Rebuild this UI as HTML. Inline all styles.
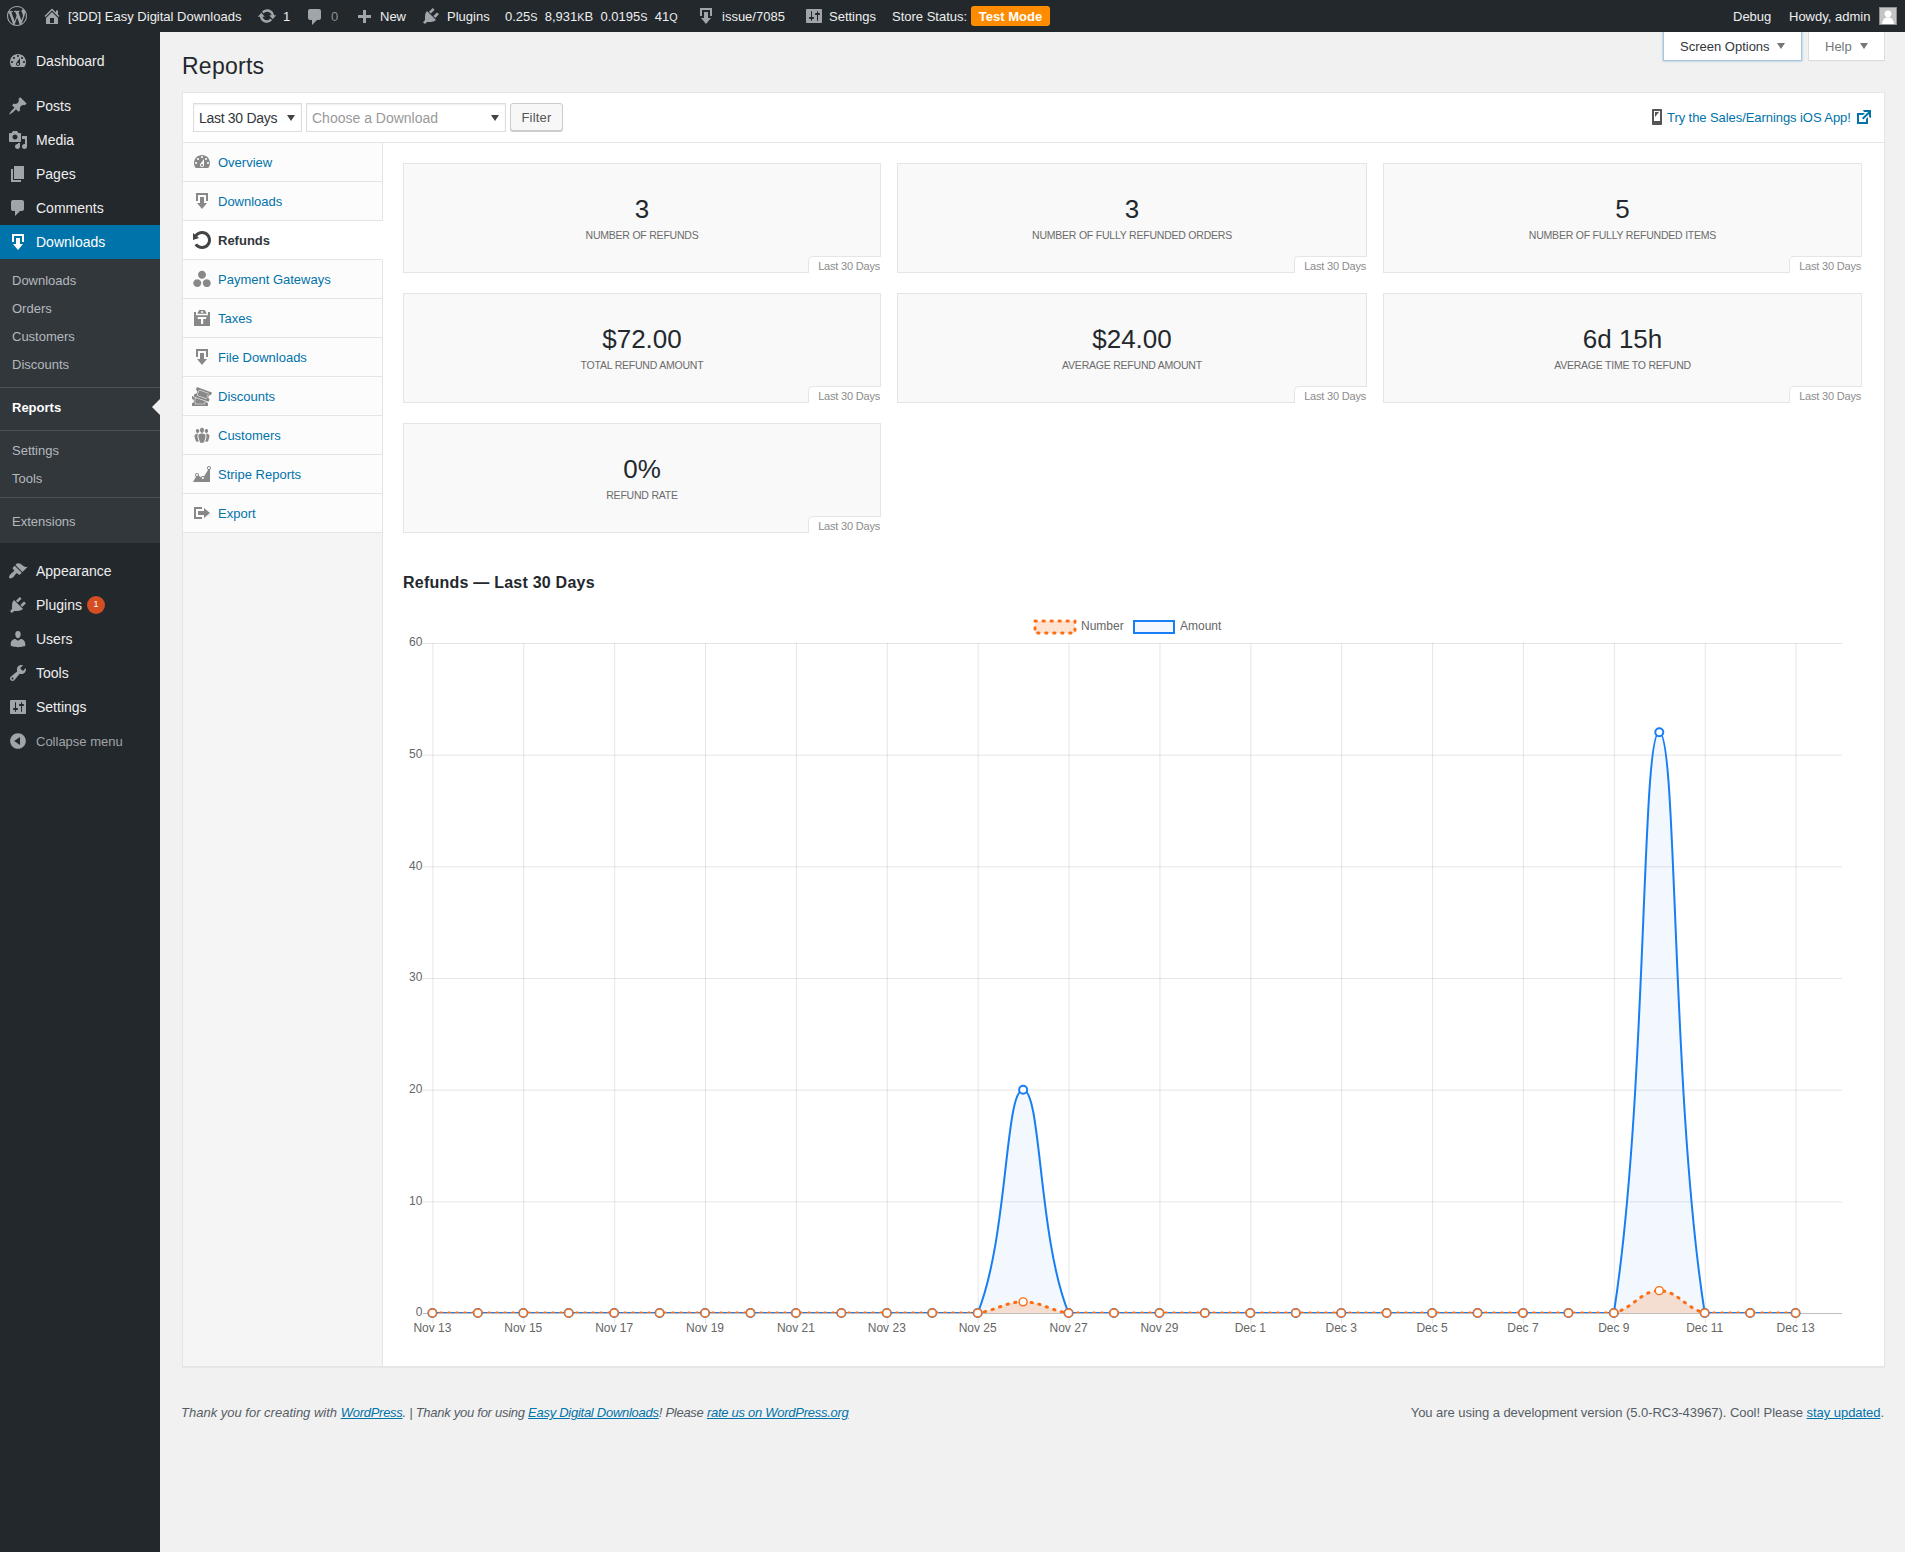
<!DOCTYPE html>
<html>
<head>
<meta charset="utf-8">
<title>Reports</title>
<style>
*{box-sizing:border-box;}
html,body{margin:0;padding:0;}
body{width:1905px;height:1552px;overflow:hidden;background:#f1f1f1;font-family:"Liberation Sans",sans-serif;font-size:13px;color:#444;position:relative;}
a{color:#0073aa;text-decoration:none;}
svg{display:block;}
.abs{position:absolute;}
/* ---------- admin bar ---------- */
#bar{position:absolute;left:0;top:0;width:1905px;height:32px;background:#23282d;color:#eee;font-size:13px;z-index:5;}
#bar .t{position:absolute;top:0;height:32px;line-height:34px;white-space:nowrap;color:#eee;}
#bar svg{position:absolute;fill:#a0a5aa;}
/* ---------- side menu ---------- */
#menu{position:absolute;left:0;top:32px;width:160px;height:1520px;background:#23282d;}
#menu .top{position:absolute;left:0;width:160px;height:34px;}
#menu .top .n{position:absolute;left:36px;top:0;line-height:34px;font-size:14px;color:#eee;white-space:nowrap;}
#menu .top svg{position:absolute;left:8px;top:7px;width:20px;height:20px;fill:#a0a5aa;}
#menu .sub{position:absolute;left:12px;font-size:13px;color:#b4b9be;white-space:nowrap;line-height:18px;}
/* ---------- content ---------- */
#panel{position:absolute;left:182px;top:92px;width:1703px;height:1275px;background:#fff;border:1px solid #e5e5e5;box-shadow:0 1px 1px rgba(0,0,0,.04);}
.nav{position:absolute;left:183px;width:200px;height:39px;background:#fcfcfc;border-bottom:1px solid #e5e5e5;border-right:1px solid #e5e5e5;}
.nav .n{position:absolute;left:35px;top:0;line-height:40px;font-size:13px;color:#0073aa;white-space:nowrap;}
.nav svg{position:absolute;left:9px;top:9px;width:20px;height:20px;fill:#888;}
.nav.cur{background:#fff;border-right-color:#fff;}
.nav.cur .n{color:#32373c;font-weight:bold;}
.nav.cur svg{fill:#444;}
.tile{position:absolute;background:#f9f9f9;border:1px solid #e5e5e5;height:110px;}
.tile .v{position:absolute;left:0;right:0;top:29px;text-align:center;font-size:26px;line-height:32px;color:#23282d;}
.tile .l{position:absolute;left:0;right:0;top:63px;text-align:center;font-size:10.5px;letter-spacing:-0.22px;line-height:16px;color:#6b6b6b;text-transform:uppercase;white-space:nowrap;}
.tile .r{position:absolute;right:-1px;bottom:-1px;width:73px;height:17px;background:#fff;border-top:1px solid #e5e5e5;border-left:1px solid #e5e5e5;border-top-left-radius:5px;font-size:11px;letter-spacing:-0.2px;line-height:18px;color:#8c8c8c;text-align:right;padding-right:1px;white-space:nowrap;}
</style>
</head>
<body>

<!-- ADMIN BAR -->
<div id="bar">
<svg style="left:7px;top:6px;width:20px;height:20px" viewBox="0 0 20 20"><path d="M20 10c0-5.51-4.49-10-10-10C4.48 0 0 4.49 0 10c0 5.52 4.48 10 10 10 5.51 0 10-4.48 10-10zM7.78 15.37L4.37 6.22c.55-.02 1.17-.08 1.17-.08.5-.06.44-1.13-.06-1.11 0 0-1.45.11-2.37.11-.18 0-.37 0-.58-.01C4.12 2.69 6.87 1.11 10 1.11c2.33 0 4.45.87 6.05 2.34-.68-.11-1.65.39-1.65 1.58 0 .74.45 1.36.9 2.1.35.61.55 1.36.55 2.46 0 1.49-1.4 5-1.4 5l-3.03-8.37c.54-.02.82-.17.82-.17.5-.05.44-1.25-.06-1.22 0 0-1.44.12-2.38.12-.87 0-2.33-.12-2.33-.12-.5-.03-.56 1.2-.06 1.22l.92.08 1.26 3.41zM17.41 10c.24-.64.74-1.87.43-4.25.7 1.29 1.05 2.71 1.05 4.25 0 3.29-1.73 6.24-4.4 7.78.97-2.59 1.94-5.2 2.92-7.78zM6.1 18.09C3.12 16.65 1.11 13.53 1.11 10c0-1.3.23-2.48.72-3.59C3.25 10.3 4.67 14.2 6.1 18.09zm4.03-6.63l2.58 6.98c-.86.29-1.76.45-2.71.45-.79 0-1.57-.11-2.29-.33.81-2.38 1.62-4.74 2.42-7.1z"/></svg>
<svg style="left:42px;top:6px;width:20px;height:20px" viewBox="0 0 20 20"><path d="M16 8.5l1.53 1.53-1.06 1.06L10 4.62l-6.47 6.47-1.06-1.06L10 2.5l4 4v-2h2v4zm-6-2.46l6 5.99V18H4v-5.97zM12 17v-5H8v5h4z"/></svg>
<span class="t" style="left:68px">[3DD] Easy Digital Downloads</span>
<svg style="left:257px;top:6px;width:20px;height:20px" viewBox="0 0 20 20"><path d="M10.2 3.28c3.53 0 6.43 2.61 6.92 6h2.08l-3.5 4-3.5-4h2.32c-.45-1.97-2.21-3.45-4.32-3.45-1.45 0-2.73.71-3.54 1.78L4.95 5.66C6.23 4.2 8.11 3.28 10.2 3.28zm-.4 13.44c-3.52 0-6.43-2.61-6.92-6H.8l3.5-4c1.17 1.33 2.33 2.67 3.5 4H5.48c.45 1.97 2.21 3.45 4.32 3.45 1.45 0 2.73-.71 3.54-1.78l1.71 1.95c-1.28 1.46-3.15 2.38-5.25 2.38z"/></svg>
<span class="t" style="left:283px">1</span>
<svg style="left:305px;top:7px;width:20px;height:20px" viewBox="0 0 20 20"><path d="M5 2h9c1.1 0 2 .9 2 2v7c0 1.1-.9 2-2 2h-2l-5 5v-5H5c-1.1 0-2-.9-2-2V4c0-1.1.9-2 2-2z"/></svg>
<span class="t" style="left:331px;color:#8a8f94">0</span>
<svg style="left:354px;top:7.5px;width:20px;height:20px" viewBox="0 0 20 20"><path d="M17 7v3h-5v5H9v-5H4V7h5V2h3v5h5z"/></svg>
<span class="t" style="left:380px">New</span>
<svg style="left:421px;top:6px;width:20px;height:20px" viewBox="0 0 20 20"><path d="M13.11 4.36L9.87 7.6 8 5.73l3.24-3.24c.35-.34 1.05-.2 1.56.32.52.51.66 1.21.31 1.55zm-8 1.77l.91-1.12 9.01 9.01-1.19.84c-.71.71-2.63 1.16-3.82 1.16H6.14L4.9 17.26c-.59.59-1.54.59-2.12 0-.59-.58-.59-1.53 0-2.12l1.24-1.24v-3.88c0-1.13.4-3.19 1.09-3.89zm7.26 3.97l3.24-3.24c.34-.35 1.04-.21 1.55.31.52.51.66 1.21.31 1.55l-3.24 3.25z"/></svg>
<span class="t" style="left:447px">Plugins</span>
<span class="t" style="left:505px">0.25<small>S</small>&nbsp;&nbsp;8,931<small>K</small>B&nbsp;&nbsp;0.0195<small>S</small>&nbsp;&nbsp;41<small>Q</small></span>
<svg style="left:696px;top:6px;width:20px;height:20px" viewBox="0 0 20 20"><path d="M14.01 4v6h2V2H4v8h2.01V4h8zm-2 2v6h3l-5 6-5-6h3V6h4z"/></svg>
<span class="t" style="left:722px">issue/7085</span>
<svg style="left:804px;top:6px;width:20px;height:20px" viewBox="0 0 20 20"><path d="M18 16V4c0-.55-.45-1-1-1H3c-.55 0-1 .45-1 1v12c0 .55.45 1 1 1h14c.55 0 1-.45 1-1zM8 11h1c.55 0 1 .45 1 1s-.45 1-1 1H8v1.5c0 .28-.22.5-.5.5s-.5-.22-.5-.5V13H6c-.55 0-1-.45-1-1s.45-1 1-1h1V5.5c0-.28.22-.5.5-.5s.5.22.5.5V11zm5-2h-1c-.55 0-1-.45-1-1s.45-1 1-1h1V5.5c0-.28.22-.5.5-.5s.5.22.5.5V7h1c.55 0 1 .45 1 1s-.45 1-1 1h-1v5.5c0 .28-.22.5-.5.5s-.5-.22-.5-.5V9z"/></svg>
<span class="t" style="left:829px">Settings</span>
<span class="t" style="left:892px">Store Status:</span>
<span class="abs" style="left:971px;top:6px;width:79px;height:20px;background:#ff8c00;border-radius:3px;color:#fff;font-weight:bold;font-size:13px;line-height:22px;text-align:center;white-space:nowrap">Test Mode</span>
<span class="t" style="left:1733px">Debug</span>
<span class="t" style="left:1789px">Howdy, admin</span>
<span class="abs" style="left:1879px;top:7px;width:18px;height:18px;background:#c4c4c4;border:1px solid #8c9196;overflow:hidden"><svg style="left:0;top:0;width:16px;height:16px;fill:#fff" viewBox="0 0 16 16"><circle cx="8" cy="5.8" r="3.4"/><path d="M2 16c.4-3.4 1.8-5.4 4.2-6.4h3.6c2.4 1 3.8 3 4.2 6.4z"/></svg></span>
</div>

<!-- SIDE MENU -->
<div id="menu">
<div class="top" style="top:12px;"><svg viewBox="0 0 20 20"><path d="M3.76 16h12.48c1.1-1.37 1.76-3.11 1.76-5 0-4.42-3.58-8-8-8s-8 3.58-8 8c0 1.89.66 3.63 1.76 5zM10 4c.55 0 1 .45 1 1s-.45 1-1 1-1-.45-1-1 .45-1 1-1zM6 6c.55 0 1 .45 1 1s-.45 1-1 1-1-.45-1-1 .45-1 1-1zm8 0c.55 0 1 .45 1 1s-.45 1-1 1-1-.45-1-1 .45-1 1-1zm-5.37 5.55L12 7v6c0 1.1-.9 2-2 2s-2-.9-2-2c0-.57.24-1.08.63-1.45zM4 10c.55 0 1 .45 1 1s-.45 1-1 1-1-.45-1-1 .45-1 1-1zm12 0c.55 0 1 .45 1 1s-.45 1-1 1-1-.45-1-1 .45-1 1-1zm-5 3c0-.55-.45-1-1-1s-1 .45-1 1 .45 1 1 1 1-.45 1-1z"/></svg><span class="n">Dashboard</span></div>
<div class="top" style="top:57px;"><svg viewBox="0 0 20 20"><path d="M10.44 3.02l1.82-1.82 6.36 6.35-1.83 1.82c-1.05-.68-2.48-.57-3.41.36l-.75.75c-.92.93-1.04 2.35-.35 3.41l-1.83 1.82-2.41-2.41-2.8 2.79c-.42.42-3.38 2.71-3.8 2.29s1.86-3.39 2.28-3.81l2.79-2.79L4.1 9.36l1.83-1.82c1.05.69 2.48.57 3.4-.36l.75-.75c.93-.92 1.05-2.35.36-3.41z"/></svg><span class="n">Posts</span></div>
<div class="top" style="top:91px;"><svg viewBox="0 0 20 20"><path d="M13 11V4c0-.55-.45-1-1-1h-1.67L9 1H5L3.67 3H2c-.55 0-1 .45-1 1v7c0 .55.45 1 1 1h10c.55 0 1-.45 1-1zM7 4.5c1.38 0 2.5 1.12 2.5 2.5S8.38 9.5 7 9.5 4.5 8.38 4.5 7 5.62 4.5 7 4.5zM14 6h5v10.5c0 1.38-1.12 2.5-2.5 2.5S14 17.88 14 16.5s1.12-2.5 2.5-2.5c.17 0 .34.02.5.05V9h-3V6zm-4 8.05V13h2v3.5c0 1.38-1.12 2.5-2.5 2.5S7 17.88 7 16.5 8.12 14 9.5 14c.17 0 .34.02.5.05z"/></svg><span class="n">Media</span></div>
<div class="top" style="top:125px;"><svg viewBox="0 0 20 20"><path d="M6 15V2h10v13H6zm-1 1h8v2H3V5h2v11z"/></svg><span class="n">Pages</span></div>
<div class="top" style="top:159px;"><svg viewBox="0 0 20 20"><path d="M5 2h9c1.1 0 2 .9 2 2v7c0 1.1-.9 2-2 2h-2l-5 5v-5H5c-1.1 0-2-.9-2-2V4c0-1.1.9-2 2-2z"/></svg><span class="n">Comments</span></div>
<div class="top" style="top:193px;background:#0073aa;"><svg style="fill:#fff" viewBox="0 0 20 20"><path d="M14.01 4v6h2V2H4v8h2.01V4h8zm-2 2v6h3l-5 6-5-6h3V6h4z"/></svg><span class="n" style="color:#fff">Downloads</span></div>
<div class="abs" style="left:0;top:227px;width:160px;height:284px;background:#32373c"></div>
<span class="sub" style="top:240px">Downloads</span>
<span class="sub" style="top:268px">Orders</span>
<span class="sub" style="top:296px">Customers</span>
<span class="sub" style="top:324px">Discounts</span>
<span class="sub" style="top:410px">Settings</span>
<span class="sub" style="top:438px">Tools</span>
<span class="sub" style="top:481px">Extensions</span>
<span class="sub" style="top:367px;color:#fff;font-weight:bold">Reports</span>
<div class="abs" style="left:0;top:355px;width:160px;height:1px;background:#4b5157"></div>
<div class="abs" style="left:0;top:398px;width:160px;height:1px;background:#4b5157"></div>
<div class="abs" style="left:0;top:465px;width:160px;height:1px;background:#4b5157"></div>
<div class="abs" style="left:152px;top:367px;width:0;height:0;border:8px solid transparent;border-right-color:#f1f1f1;border-left-width:0"></div>
<div class="top" style="top:522px;"><svg viewBox="0 0 20 20"><path d="M14.48 11.06L7.41 3.99l1.5-1.5c.5-.56 2.3-.47 3.51.32 1.21.8 1.43 1.28 2.91 2.1 1.18.64 2.45 1.26 4.45.85zm-.71.71L6.7 4.7 4.93 6.47c-.39.39-.39 1.02 0 1.41l1.06 1.06c.39.39.39 1.03 0 1.42-.6.6-1.43 1.11-2.21 1.69-.35.26-.7.53-1.01.84C1.43 14.23.4 16.08 1.4 17.07c.99 1 2.84-.03 4.18-1.36.31-.31.58-.66.85-1.02.57-.78 1.08-1.61 1.69-2.21.39-.39 1.02-.39 1.41 0l1.06 1.06c.39.39 1.02.39 1.41 0z"/></svg><span class="n">Appearance</span></div>
<div class="top" style="top:556px;"><svg viewBox="0 0 20 20"><path d="M13.11 4.36L9.87 7.6 8 5.73l3.24-3.24c.35-.34 1.05-.2 1.56.32.52.51.66 1.21.31 1.55zm-8 1.77l.91-1.12 9.01 9.01-1.19.84c-.71.71-2.63 1.16-3.82 1.16H6.14L4.9 17.26c-.59.59-1.54.59-2.12 0-.59-.58-.59-1.53 0-2.12l1.24-1.24v-3.88c0-1.13.4-3.19 1.09-3.89zm7.26 3.97l3.24-3.24c.34-.35 1.04-.21 1.55.31.52.51.66 1.21.31 1.55l-3.24 3.25z"/></svg><span class="n">Plugins</span><span class="abs" style="left:87px;top:8px;width:18px;height:18px;border-radius:9px;background:#d54e21;color:#fff;font-size:9px;line-height:17px;text-align:center">1</span></div>
<div class="top" style="top:590px;"><svg viewBox="0 0 20 20"><path d="M10 9.25c-2.27 0-2.73-3.44-2.73-3.44C7 4.02 7.82 2 9.97 2c2.16 0 2.98 2.02 2.71 3.81 0 0-.41 3.44-2.68 3.44zm0 2.57L12.72 10c2.39 0 4.52 2.33 4.52 4.53v2.49s-3.65 1.13-7.24 1.13c-3.65 0-7.24-1.13-7.24-1.13v-2.49c0-2.25 1.94-4.48 4.47-4.48z"/></svg><span class="n">Users</span></div>
<div class="top" style="top:624px;"><svg viewBox="0 0 20 20"><path d="M16.68 9.77c-1.34 1.34-3.3 1.67-4.95.99l-5.41 6.52c-.99.99-2.59.99-3.58 0s-.99-2.59 0-3.57l6.52-5.42c-.68-1.65-.35-3.61.99-4.95 1.28-1.28 3.12-1.62 4.72-1.06l-2.89 2.89 2.82 2.82 2.86-2.87c.53 1.58.18 3.39-1.08 4.65zM3.81 16.21c.4.39 1.04.39 1.43 0 .4-.4.4-1.04 0-1.43-.39-.4-1.03-.4-1.43 0-.39.39-.39 1.03 0 1.43z"/></svg><span class="n">Tools</span></div>
<div class="top" style="top:658px;"><svg viewBox="0 0 20 20"><path d="M18 16V4c0-.55-.45-1-1-1H3c-.55 0-1 .45-1 1v12c0 .55.45 1 1 1h14c.55 0 1-.45 1-1zM8 11h1c.55 0 1 .45 1 1s-.45 1-1 1H8v1.5c0 .28-.22.5-.5.5s-.5-.22-.5-.5V13H6c-.55 0-1-.45-1-1s.45-1 1-1h1V5.5c0-.28.22-.5.5-.5s.5.22.5.5V11zm5-2h-1c-.55 0-1-.45-1-1s.45-1 1-1h1V5.5c0-.28.22-.5.5-.5s.5.22.5.5V7h1c.55 0 1 .45 1 1s-.45 1-1 1h-1v5.5c0 .28-.22.5-.5.5s-.5-.22-.5-.5V9z"/></svg><span class="n">Settings</span></div>
<div class="top" style="top:692px;"><svg viewBox="0 0 20 20"><path d="M10 2.16c4.33 0 7.84 3.51 7.84 7.84s-3.51 7.84-7.84 7.84S2.16 14.33 2.16 10 5.67 2.16 10 2.16zm2 11.72V6.12L6.18 9.97z"/></svg><span class="n" style="font-size:13px;color:#a0a5aa;top:1px">Collapse menu</span></div>
</div>

<!-- CONTENT -->
<div class="abs" style="left:182px;top:51px;font-size:23px;letter-spacing:0.25px;line-height:31px;color:#23282d;white-space:nowrap">Reports</div>
<div class="abs" style="left:1663px;top:32px;width:139px;height:29px;background:#fff;border:1px solid #a9c6dc;border-top:none;box-shadow:0 0 2px rgba(30,140,190,.55);font-size:13px;line-height:30px;color:#32373c;white-space:nowrap"><span class="abs" style="left:16px;top:0">Screen Options</span><span class="abs" style="left:113px;top:11px;width:0;height:0;border:4px solid transparent;border-top:6px solid #72777c;border-bottom-width:0"></span></div>
<div class="abs" style="left:1808px;top:32px;width:77px;height:29px;background:#fff;border:1px solid #ddd;border-top:none;box-shadow:0 1px 1px -1px rgba(0,0,0,.1);font-size:13px;line-height:30px;color:#72777c;white-space:nowrap"><span class="abs" style="left:16px;top:0">Help</span><span class="abs" style="left:51px;top:11px;width:0;height:0;border:4px solid transparent;border-top:6px solid #72777c;border-bottom-width:0"></span></div>
<div id="panel"></div>
<div class="abs" style="left:183px;top:142px;width:1701px;height:1px;background:#e5e5e5"></div>
<div class="abs" style="left:193px;top:103px;width:109px;height:29px;background:#fff;border:1px solid #ddd;box-shadow:inset 0 1px 2px rgba(0,0,0,.07);font-size:14px;letter-spacing:-0.3px;line-height:29px;color:#32373c;white-space:nowrap"><span class="abs" style="left:5px;top:0">Last 30 Days</span><span class="abs" style="left:93px;top:11px;width:0;height:0;border:4px solid transparent;border-top:6px solid #444;border-bottom-width:0"></span></div>
<div class="abs" style="left:306px;top:103px;width:200px;height:29px;background:#fff;border:1px solid #ddd;box-shadow:inset 0 1px 2px rgba(0,0,0,.07);font-size:14px;line-height:29px;color:#999;white-space:nowrap"><span class="abs" style="left:5px;top:0">Choose a Download</span><span class="abs" style="left:184px;top:11px;width:0;height:0;border:4px solid transparent;border-top:6px solid #444;border-bottom-width:0"></span></div>
<div class="abs" style="left:510px;top:103px;width:53px;height:28px;background:#f7f7f7;border:1px solid #ccc;border-radius:3px;box-shadow:0 1px 0 #ccc;font-size:13px;letter-spacing:0.2px;line-height:28px;color:#555;text-align:center">Filter</div>
<svg class="abs" style="left:1647px;top:107px;width:20px;height:20px;fill:#555" viewBox="0 0 20 20"><path d="M6 2h8c.55 0 1 .45 1 1v14c0 .55-.45 1-1 1H6c-.55 0-1-.45-1-1V3c0-.55.45-1 1-1zm7 12V4H7v10h6zM8 5h4l-4 5V5z"/></svg>
<a class="abs" style="left:1667px;top:109px;font-size:13px;letter-spacing:-0.07px;line-height:18px;white-space:nowrap">Try the Sales/Earnings iOS App!</a>
<svg class="abs" style="left:1854px;top:107px;width:20px;height:20px;fill:#0073aa" viewBox="0 0 20 20"><path d="M9 3h8v8l-2-1V6.92l-5.6 5.59-1.41-1.41L14.08 5H10zm3 12v-3l2-2v7H3V6h8L9 8H5v7h7z"/></svg>
<div class="abs" style="left:183px;top:143px;width:200px;height:1223px;background:#f5f5f5;border-right:1px solid #e5e5e5"></div>
<div class="nav" style="top:143px"><svg viewBox="0 0 20 20"><path d="M3.76 16h12.48c1.1-1.37 1.76-3.11 1.76-5 0-4.42-3.58-8-8-8s-8 3.58-8 8c0 1.89.66 3.63 1.76 5zM10 4c.55 0 1 .45 1 1s-.45 1-1 1-1-.45-1-1 .45-1 1-1zM6 6c.55 0 1 .45 1 1s-.45 1-1 1-1-.45-1-1 .45-1 1-1zm8 0c.55 0 1 .45 1 1s-.45 1-1 1-1-.45-1-1 .45-1 1-1zm-5.37 5.55L12 7v6c0 1.1-.9 2-2 2s-2-.9-2-2c0-.57.24-1.08.63-1.45zM4 10c.55 0 1 .45 1 1s-.45 1-1 1-1-.45-1-1 .45-1 1-1zm12 0c.55 0 1 .45 1 1s-.45 1-1 1-1-.45-1-1 .45-1 1-1zm-5 3c0-.55-.45-1-1-1s-1 .45-1 1 .45 1 1 1 1-.45 1-1z"/></svg><span class="n">Overview</span></div>
<div class="nav" style="top:182px"><svg viewBox="0 0 20 20"><path d="M14.01 4v6h2V2H4v8h2.01V4h8zm-2 2v6h3l-5 6-5-6h3V6h4z"/></svg><span class="n">Downloads</span></div>
<div class="nav cur" style="top:221px"><svg viewBox="0 0 20 20"><path d="M10.25 1.02c5.1 0 8.75 4.04 8.75 9s-3.65 9-8.75 9c-3.2 0-6.02-1.59-7.68-3.99l2.59-1.52c1.1 1.5 2.86 2.51 4.84 2.51 3.3 0 6-2.79 6-6s-2.7-6-6-6c-1.97 0-3.72 1-4.82 2.49L7 8.02l-6 2v-7L2.89 4.6c1.69-2.17 4.36-3.58 7.36-3.58z"/></svg><span class="n">Refunds</span></div>
<div class="nav" style="top:260px"><svg viewBox="0 0 20 20"><path d="M14 5.87c0-2.2-1.79-4-4-4s-4 1.8-4 4c0 2.21 1.79 4 4 4s4-1.79 4-4zM3.24 10.66c-1.92 1.1-2.57 3.55-1.47 5.46 1.11 1.92 3.55 2.57 5.47 1.47 1.91-1.11 2.57-3.55 1.46-5.47-1.1-1.91-3.55-2.56-5.46-1.46zm9.52 6.93c1.92 1.1 4.36.45 5.47-1.46 1.1-1.92.45-4.36-1.47-5.47-1.91-1.1-4.36-.45-5.46 1.46-1.11 1.92-.45 4.36 1.46 5.47z"/></svg><span class="n">Payment Gateways</span></div>
<div class="nav" style="top:299px"><svg viewBox="0 0 20 20"><path fill-rule="evenodd" d="M2 4.1h2v3.1h12V4.1h2V18H2zM5.7 9v2H9v5h2.2v-5h3V9zM5.2 5.7L7.2 2h5.6l2 3.7zM9 3.2v1.6h2.2V3.2z"/></svg><span class="n">Taxes</span></div>
<div class="nav" style="top:338px"><svg viewBox="0 0 20 20"><path d="M14.01 4v6h2V2H4v8h2.01V4h8zm-2 2v6h3l-5 6-5-6h3V6h4z"/></svg><span class="n">File Downloads</span></div>
<div class="nav" style="top:377px"><svg viewBox="0 0 20 20"><path d="M20 6.38L18.99 9.2v-.01c-.52-.19-1.03-.16-1.53.08s-.85.62-1.04 1.14-.16 1.03.07 1.53c.24.5.62.84 1.15 1.03v.01l-1.01 2.82-15.06-5.38.99-2.79c.52.19 1.03.16 1.53-.08.5-.23.84-.61 1.03-1.13s.16-1.03-.08-1.53c-.23-.49-.61-.83-1.13-1.02L4.93 1zm-4.97 5.69l1.37-3.76c.12-.31.1-.65-.04-.95s-.39-.53-.7-.65L8.14 3.98c-.64-.23-1.37.12-1.6.74L5.17 8.48c-.24.65.1 1.37.74 1.6l7.52 2.74c.14.05.28.08.43.08.52 0 1-.33 1.17-.83zM7.97 4.45l7.51 2.73c.19.07.34.21.43.39.08.18.09.38.02.57l-1.37 3.76c-.13.38-.58.59-.96.45L6.09 9.61c-.39-.14-.59-.57-.45-.96l1.37-3.76c.1-.29.39-.49.7-.49.09 0 .17.02.26.05zm6.82 12.14c.35.27.75.41 1.2.41H16v3H0v-2.96c.55 0 1.03-.2 1.41-.59.39-.38.59-.86.59-1.41s-.2-1.02-.59-1.41-.86-.59-1.41-.59V10h1.05l-.28.8 2.87 1.02c-.51.16-.89.62-.89 1.18v4c0 .69.56 1.25 1.25 1.25h8c.69 0 1.25-.56 1.25-1.25v-1.75l.83.3c.12.43.36.78.71 1.04zM3.25 17v-4c0-.41.34-.75.75-.75h.83l7.92 2.83V17c0 .41-.34.75-.75.75H4c-.41 0-.75-.34-.75-.75z"/></svg><span class="n">Discounts</span></div>
<div class="nav" style="top:416px"><svg viewBox="0 0 20 20"><path d="M8.03 4.46c-.29 1.28.55 3.46 1.97 3.46 1.41 0 2.25-2.18 1.96-3.46-.22-.98-1.08-1.63-1.96-1.63-.89 0-1.74.65-1.97 1.63zm-4.13.9c-.25 1.08.47 2.93 1.67 2.93s1.92-1.85 1.67-2.93c-.19-.83-.92-1.39-1.67-1.39s-1.48.56-1.67 1.39zm8.86 0c-.25 1.08.47 2.93 1.66 2.93 1.2 0 1.92-1.85 1.67-2.93-.19-.83-.92-1.39-1.67-1.39-.74 0-1.47.56-1.66 1.39zm-.59 11.43l1.25-4.3C14.2 10 12.71 8.47 10 8.47c-2.72 0-4.21 1.53-3.44 4.02l1.26 4.3C8.05 17.51 9 18 10 18c.98 0 1.94-.49 2.17-1.21zm-6.1-7.63c-.49.67-.96 1.83-.42 3.59l1.12 3.79c-.34.2-.77.31-1.2.31-.85 0-1.65-.41-1.85-1.03l-1.07-3.65c-.65-2.11.61-3.4 2.92-3.4.27 0 .54.02.79.06-.1.1-.2.22-.29.33zm8.35-.39c2.31 0 3.58 1.29 2.92 3.4l-1.07 3.65c-.2.62-1 1.03-1.85 1.03-.43 0-.86-.11-1.2-.31l1.11-3.77c.55-1.78.08-2.94-.42-3.61-.08-.11-.18-.23-.28-.33.25-.04.51-.06.79-.06z"/></svg><span class="n">Customers</span></div>
<div class="nav" style="top:455px"><svg viewBox="0 0 20 20"><path d="M18 18l.01-12.28c.59-.35.99-.99.99-1.72 0-1.1-.9-2-2-2s-2 .9-2 2c0 .8.47 1.48 1.14 1.8l-4.13 6.58c-.33-.24-.73-.38-1.16-.38-.84 0-1.55.51-1.85 1.24l-2.14-1.53c.09-.22.14-.46.14-.71 0-1.11-.89-2-2-2-1.1 0-2 .89-2 2 0 .73.4 1.36.98 1.71L1 18h17zM17 3c.55 0 1 .45 1 1s-.45 1-1 1-1-.45-1-1 .45-1 1-1zM5 10c.55 0 1 .45 1 1s-.45 1-1 1-1-.45-1-1 .45-1 1-1zm5.85 3c.55 0 1 .45 1 1s-.45 1-1 1-1-.45-1-1 .45-1 1-1z"/></svg><span class="n">Stripe Reports</span></div>
<div class="nav" style="top:494px"><svg viewBox="0 0 20 20"><path d="M4 6h6V4H2v12.01h8V14H4V6zm2 2h6V5l6 5-6 5v-3H6V8z"/></svg><span class="n">Export</span></div>
<div class="tile" style="left:403px;top:163px;width:478px"><div class="v">3</div><div class="l">Number of Refunds</div><div class="r">Last 30 Days</div></div>
<div class="tile" style="left:897px;top:163px;width:470px"><div class="v">3</div><div class="l">Number of Fully Refunded Orders</div><div class="r">Last 30 Days</div></div>
<div class="tile" style="left:1383px;top:163px;width:479px"><div class="v">5</div><div class="l">Number of Fully Refunded Items</div><div class="r">Last 30 Days</div></div>
<div class="tile" style="left:403px;top:293px;width:478px"><div class="v">$72.00</div><div class="l">Total Refund Amount</div><div class="r">Last 30 Days</div></div>
<div class="tile" style="left:897px;top:293px;width:470px"><div class="v">$24.00</div><div class="l">Average Refund Amount</div><div class="r">Last 30 Days</div></div>
<div class="tile" style="left:1383px;top:293px;width:479px"><div class="v">6d 15h</div><div class="l">Average Time to Refund</div><div class="r">Last 30 Days</div></div>
<div class="tile" style="left:403px;top:423px;width:478px"><div class="v">0%</div><div class="l">Refund Rate</div><div class="r">Last 30 Days</div></div>
<div class="abs" style="left:403px;top:571px;font-size:16px;letter-spacing:0.23px;line-height:24px;font-weight:bold;color:#23282d;white-space:nowrap">Refunds &mdash; Last 30 Days</div>
<!--CHART-S-->
<svg class="abs" style="left:0;top:0" width="1905" height="1552" viewBox="0 0 1905 1552" font-family="Liberation Sans, sans-serif" font-size="12" fill="#666">
<path d="M432.90 643.0V1323.5M523.78 643.0V1323.5M614.66 643.0V1323.5M705.54 643.0V1323.5M796.42 643.0V1323.5M887.30 643.0V1323.5M978.18 643.0V1323.5M1069.06 643.0V1323.5M1159.94 643.0V1323.5M1250.82 643.0V1323.5M1341.70 643.0V1323.5M1432.58 643.0V1323.5M1523.46 643.0V1323.5M1614.34 643.0V1323.5M1705.22 643.0V1323.5M1796.10 643.0V1323.5M423.0 1201.83H1842.00M423.0 1090.17H1842.00M423.0 978.50H1842.00M423.0 866.83H1842.00M423.0 755.17H1842.00M423.0 643.50H1842.00" stroke="rgba(0,0,0,0.1)" stroke-width="1" fill="none"/>
<path d="M423.0 1313.50H1842.00" stroke="rgba(0,0,0,0.25)" stroke-width="1" fill="none"/>
<clipPath id="ca"><rect x="432.40" y="643.00" width="1409.60" height="670.00"/></clipPath>
<path clip-path="url(#ca)" d="M432.40 1313.00L477.84 1313.00L523.28 1313.00L568.72 1313.00L614.16 1313.00L659.60 1313.00L705.04 1313.00L750.48 1313.00L795.92 1313.00L841.36 1313.00L886.80 1313.00L932.24 1313.00L977.68 1313.00C1007.99 1238.52 1004.94 1089.67 1023.12 1089.67C1041.30 1089.67 1038.25 1238.52 1068.56 1313.00L1114.00 1313.00L1159.44 1313.00L1204.88 1313.00L1250.32 1313.00L1295.76 1313.00L1341.20 1313.00L1386.64 1313.00L1432.08 1313.00L1477.52 1313.00L1522.96 1313.00L1568.40 1313.00L1613.84 1313.00C1647.56 1097.54 1641.10 732.33 1659.28 732.33C1677.46 732.33 1671.00 1097.54 1704.72 1313.00L1750.16 1313.00L1795.60 1313.00L1795.60 1313.00L432.40 1313.00Z" fill="rgba(24,126,244,0.05)" stroke="none"/>
<path clip-path="url(#ca)" d="M432.40 1313.00L477.84 1313.00L523.28 1313.00L568.72 1313.00L614.16 1313.00L659.60 1313.00L705.04 1313.00L750.48 1313.00L795.92 1313.00L841.36 1313.00L886.80 1313.00L932.24 1313.00L977.68 1313.00C1007.99 1238.52 1004.94 1089.67 1023.12 1089.67C1041.30 1089.67 1038.25 1238.52 1068.56 1313.00L1114.00 1313.00L1159.44 1313.00L1204.88 1313.00L1250.32 1313.00L1295.76 1313.00L1341.20 1313.00L1386.64 1313.00L1432.08 1313.00L1477.52 1313.00L1522.96 1313.00L1568.40 1313.00L1613.84 1313.00C1647.56 1097.54 1641.10 732.33 1659.28 732.33C1677.46 732.33 1671.00 1097.54 1704.72 1313.00L1750.16 1313.00L1795.60 1313.00" fill="none" stroke="rgb(24,126,244)" stroke-width="2" stroke-linejoin="miter"/>
<g fill="#fff" stroke="rgb(24,126,244)" stroke-width="2"><circle cx="432.40" cy="1313.00" r="4"/><circle cx="477.84" cy="1313.00" r="4"/><circle cx="523.28" cy="1313.00" r="4"/><circle cx="568.72" cy="1313.00" r="4"/><circle cx="614.16" cy="1313.00" r="4"/><circle cx="659.60" cy="1313.00" r="4"/><circle cx="705.04" cy="1313.00" r="4"/><circle cx="750.48" cy="1313.00" r="4"/><circle cx="795.92" cy="1313.00" r="4"/><circle cx="841.36" cy="1313.00" r="4"/><circle cx="886.80" cy="1313.00" r="4"/><circle cx="932.24" cy="1313.00" r="4"/><circle cx="977.68" cy="1313.00" r="4"/><circle cx="1023.12" cy="1089.67" r="4"/><circle cx="1068.56" cy="1313.00" r="4"/><circle cx="1114.00" cy="1313.00" r="4"/><circle cx="1159.44" cy="1313.00" r="4"/><circle cx="1204.88" cy="1313.00" r="4"/><circle cx="1250.32" cy="1313.00" r="4"/><circle cx="1295.76" cy="1313.00" r="4"/><circle cx="1341.20" cy="1313.00" r="4"/><circle cx="1386.64" cy="1313.00" r="4"/><circle cx="1432.08" cy="1313.00" r="4"/><circle cx="1477.52" cy="1313.00" r="4"/><circle cx="1522.96" cy="1313.00" r="4"/><circle cx="1568.40" cy="1313.00" r="4"/><circle cx="1613.84" cy="1313.00" r="4"/><circle cx="1659.28" cy="732.33" r="4"/><circle cx="1704.72" cy="1313.00" r="4"/><circle cx="1750.16" cy="1313.00" r="4"/><circle cx="1795.60" cy="1313.00" r="4"/></g>
<path clip-path="url(#ca)" d="M432.40 1313.00L477.84 1313.00L523.28 1313.00L568.72 1313.00L614.16 1313.00L659.60 1313.00L705.04 1313.00L750.48 1313.00L795.92 1313.00L841.36 1313.00L886.80 1313.00L932.24 1313.00L977.68 1313.00C996.12 1310.73 1004.94 1301.83 1023.12 1301.83C1041.30 1301.83 1050.12 1310.73 1068.56 1313.00L1114.00 1313.00L1159.44 1313.00L1204.88 1313.00L1250.32 1313.00L1295.76 1313.00L1341.20 1313.00L1386.64 1313.00L1432.08 1313.00L1477.52 1313.00L1522.96 1313.00L1568.40 1313.00L1613.84 1313.00C1633.00 1308.29 1641.10 1290.67 1659.28 1290.67C1677.46 1290.67 1685.56 1308.29 1704.72 1313.00L1750.16 1313.00L1795.60 1313.00L1795.60 1313.00L432.40 1313.00Z" fill="rgba(252,108,18,0.19)" stroke="none"/>
<path clip-path="url(#ca)" d="M432.40 1313.00L477.84 1313.00L523.28 1313.00L568.72 1313.00L614.16 1313.00L659.60 1313.00L705.04 1313.00L750.48 1313.00L795.92 1313.00L841.36 1313.00L886.80 1313.00L932.24 1313.00L977.68 1313.00C996.12 1310.73 1004.94 1301.83 1023.12 1301.83C1041.30 1301.83 1050.12 1310.73 1068.56 1313.00L1114.00 1313.00L1159.44 1313.00L1204.88 1313.00L1250.32 1313.00L1295.76 1313.00L1341.20 1313.00L1386.64 1313.00L1432.08 1313.00L1477.52 1313.00L1522.96 1313.00L1568.40 1313.00L1613.84 1313.00C1633.00 1308.29 1641.10 1290.67 1659.28 1290.67C1677.46 1290.67 1685.56 1308.29 1704.72 1313.00L1750.16 1313.00L1795.60 1313.00" fill="none" stroke="rgb(252,108,18)" stroke-width="3" stroke-dasharray="1.3 6.7" stroke-linecap="round" stroke-linejoin="round"/>
<g fill="#fff" stroke="rgb(252,108,18)" stroke-width="1.4"><circle cx="432.40" cy="1313.00" r="4"/><circle cx="477.84" cy="1313.00" r="4"/><circle cx="523.28" cy="1313.00" r="4"/><circle cx="568.72" cy="1313.00" r="4"/><circle cx="614.16" cy="1313.00" r="4"/><circle cx="659.60" cy="1313.00" r="4"/><circle cx="705.04" cy="1313.00" r="4"/><circle cx="750.48" cy="1313.00" r="4"/><circle cx="795.92" cy="1313.00" r="4"/><circle cx="841.36" cy="1313.00" r="4"/><circle cx="886.80" cy="1313.00" r="4"/><circle cx="932.24" cy="1313.00" r="4"/><circle cx="977.68" cy="1313.00" r="4"/><circle cx="1023.12" cy="1301.83" r="4"/><circle cx="1068.56" cy="1313.00" r="4"/><circle cx="1114.00" cy="1313.00" r="4"/><circle cx="1159.44" cy="1313.00" r="4"/><circle cx="1204.88" cy="1313.00" r="4"/><circle cx="1250.32" cy="1313.00" r="4"/><circle cx="1295.76" cy="1313.00" r="4"/><circle cx="1341.20" cy="1313.00" r="4"/><circle cx="1386.64" cy="1313.00" r="4"/><circle cx="1432.08" cy="1313.00" r="4"/><circle cx="1477.52" cy="1313.00" r="4"/><circle cx="1522.96" cy="1313.00" r="4"/><circle cx="1568.40" cy="1313.00" r="4"/><circle cx="1613.84" cy="1313.00" r="4"/><circle cx="1659.28" cy="1290.67" r="4"/><circle cx="1704.72" cy="1313.00" r="4"/><circle cx="1750.16" cy="1313.00" r="4"/><circle cx="1795.60" cy="1313.00" r="4"/></g>
<text x="422.4" y="1316.4" text-anchor="end">0</text>
<text x="422.4" y="1204.7" text-anchor="end">10</text>
<text x="422.4" y="1093.1" text-anchor="end">20</text>
<text x="422.4" y="981.4" text-anchor="end">30</text>
<text x="422.4" y="869.7" text-anchor="end">40</text>
<text x="422.4" y="758.1" text-anchor="end">50</text>
<text x="422.4" y="646.4" text-anchor="end">60</text>
<text x="432.40" y="1332" text-anchor="middle">Nov 13</text>
<text x="523.28" y="1332" text-anchor="middle">Nov 15</text>
<text x="614.16" y="1332" text-anchor="middle">Nov 17</text>
<text x="705.04" y="1332" text-anchor="middle">Nov 19</text>
<text x="795.92" y="1332" text-anchor="middle">Nov 21</text>
<text x="886.80" y="1332" text-anchor="middle">Nov 23</text>
<text x="977.68" y="1332" text-anchor="middle">Nov 25</text>
<text x="1068.56" y="1332" text-anchor="middle">Nov 27</text>
<text x="1159.44" y="1332" text-anchor="middle">Nov 29</text>
<text x="1250.32" y="1332" text-anchor="middle">Dec 1</text>
<text x="1341.20" y="1332" text-anchor="middle">Dec 3</text>
<text x="1432.08" y="1332" text-anchor="middle">Dec 5</text>
<text x="1522.96" y="1332" text-anchor="middle">Dec 7</text>
<text x="1613.84" y="1332" text-anchor="middle">Dec 9</text>
<text x="1704.72" y="1332" text-anchor="middle">Dec 11</text>
<text x="1795.60" y="1332" text-anchor="middle">Dec 13</text>
<rect x="1035" y="621" width="40" height="12" fill="rgba(252,108,18,0.19)" stroke="rgb(252,108,18)" stroke-width="3" stroke-dasharray="1.3 6.7" stroke-linecap="round" stroke-linejoin="round"/>
<text x="1081" y="630">Number</text>
<rect x="1134" y="621" width="40" height="12" fill="rgba(24,126,244,0.05)" stroke="rgb(24,126,244)" stroke-width="2"/>
<text x="1180" y="630">Amount</text>
</svg>
<!--CHART-E-->
<div class="abs" style="left:181px;top:1404px;font-size:13px;line-height:18px;font-style:italic;color:#555d66;white-space:nowrap">Thank you for creating with <span style="letter-spacing:-0.27px"><a style="text-decoration:underline">WordPress</a>. | Thank you for using <a style="text-decoration:underline">Easy Digital Downloads</a>! Please <a style="text-decoration:underline">rate us on WordPress.org</a></span></div>
<div class="abs" style="right:21px;top:1404px;letter-spacing:-0.05px;font-size:13px;line-height:18px;color:#555d66;white-space:nowrap;text-align:right">You are using a development version (5.0-RC3-43967). Cool! Please <a style="text-decoration:underline">stay updated</a>.</div>

</body>
</html>
